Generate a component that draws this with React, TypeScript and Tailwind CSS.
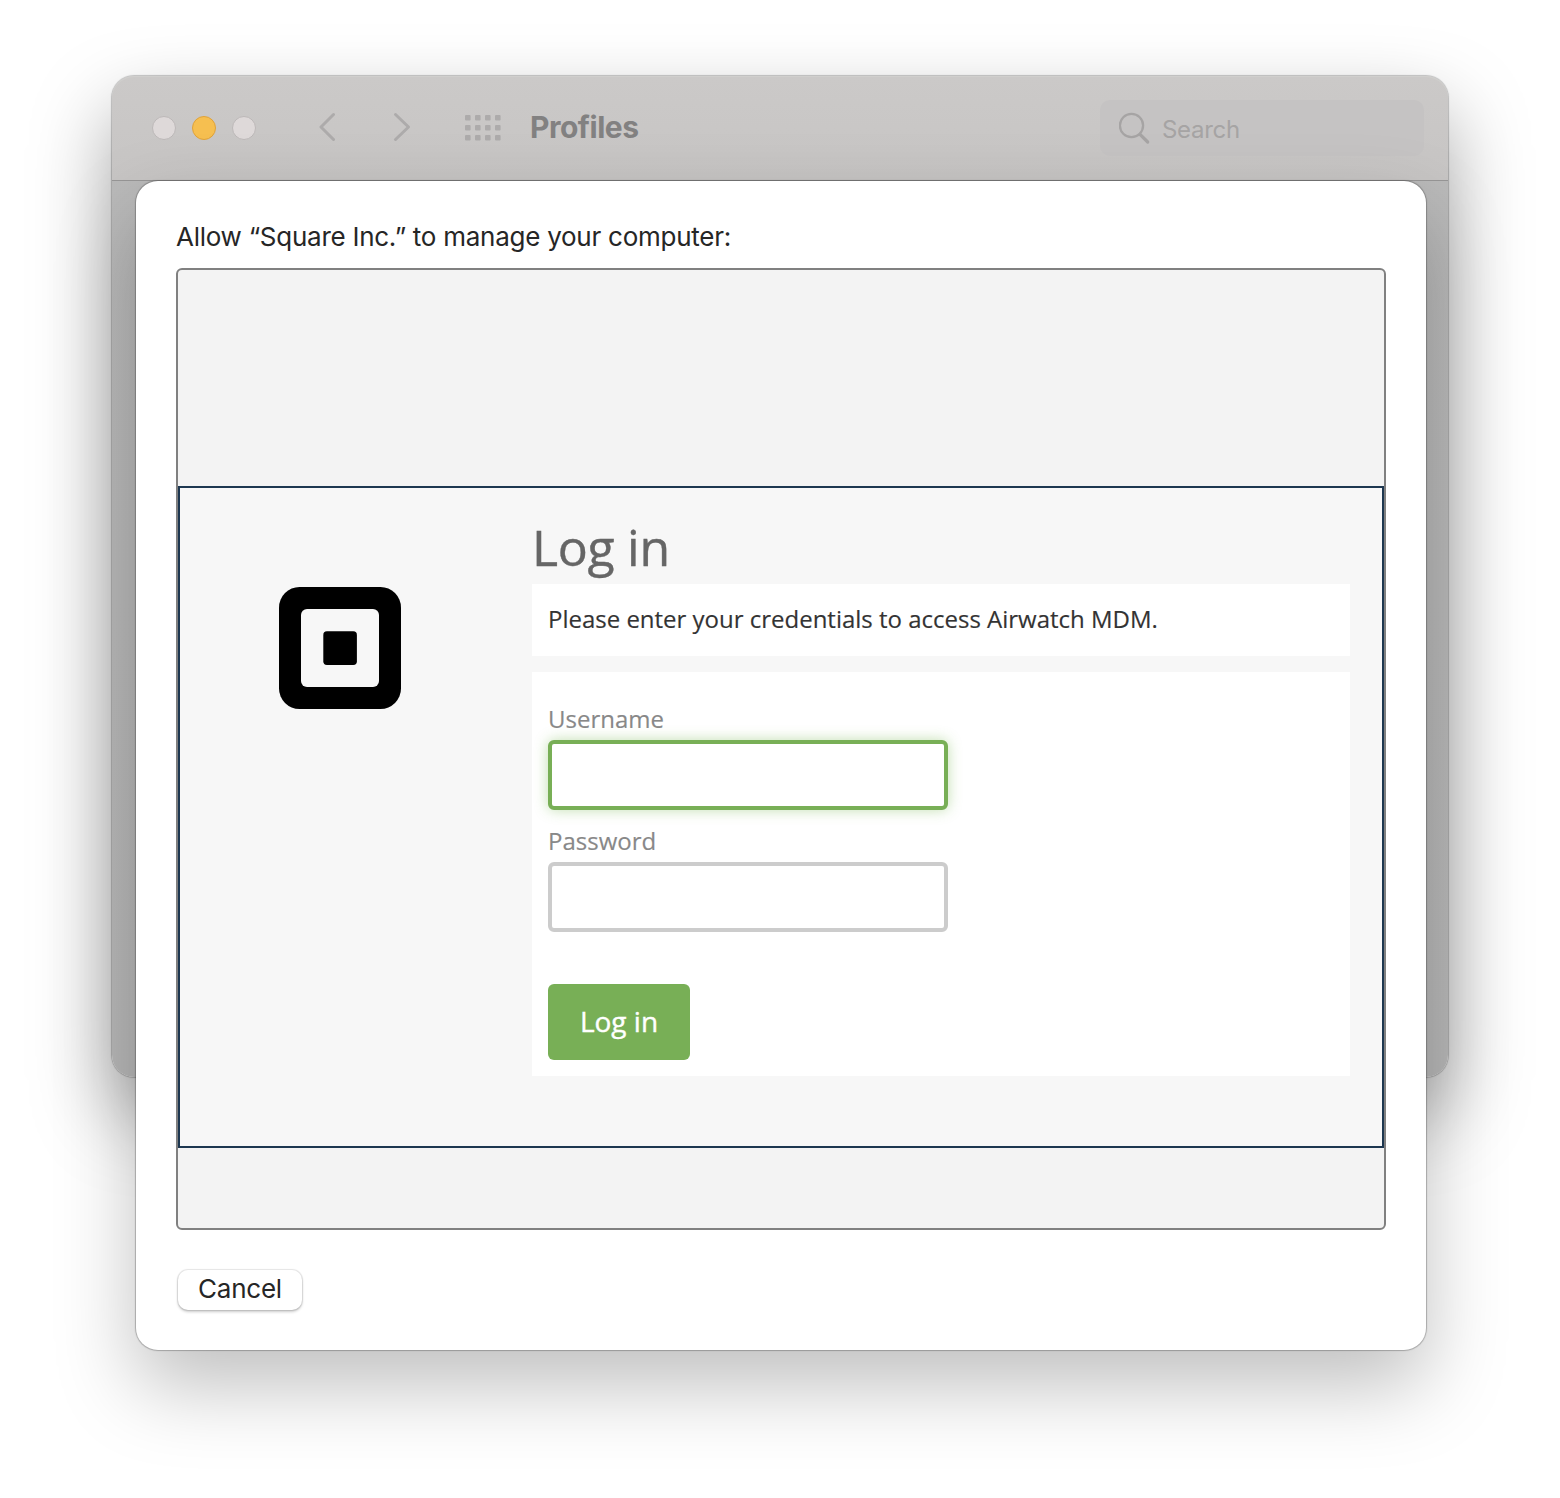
import React from "react";

function TrafficLights() {
  return (
    <div className="ml-10 flex gap-4">
      <span className="size-6 rounded-full border border-[#bcb8b8] bg-[#ded9d9]" />
      <span className="size-6 rounded-full border border-[#dfa23a] bg-[#f6bf50]" />
      <span className="size-6 rounded-full border border-[#bcb8b8] bg-[#ded9d9]" />
    </div>
  );
}

function Chevron({ d }: { d: string }) {
  return (
    <svg width="18" height="30" viewBox="0 0 18 30" fill="none" stroke="#adabab" strokeWidth="3" strokeLinecap="round" strokeLinejoin="round">
      <path d={d} />
    </svg>
  );
}

function GridIcon() {
  return (
    <svg className="ml-[54px]" width="36" height="26" viewBox="0 0 36 26" fill="#adabab">
      {[0, 10, 20, 30].map((x) =>
        [0, 10, 20].map((y) => <rect key={`${x}-${y}`} x={x} y={y} width="5.6" height="5.6" rx="1" />)
      )}
    </svg>
  );
}

function Toolbar() {
  return (
    <header className="flex h-[105px] items-center rounded-t-[22px] border-b border-[#979696] bg-linear-to-b from-[#cbc9c8] to-[#c7c5c4] shadow-[inset_0_1px_0_#d0cfcd]">
      <TrafficLights />
      <div className="mb-[2px] ml-[61px] flex w-[94px] justify-between">
        <Chevron d="M16.5 2.5 L4 15 L16.5 27.5" />
        <Chevron d="M2.5 2.5 L15.5 15 L2.5 27.5" />
      </div>
      <GridIcon />
      <h1 className="mb-[2px] ml-[29px] text-[30px] leading-9 font-bold tracking-[-0.5px] text-[#828181]">Profiles</h1>
      <div className="mr-6 ml-auto flex h-14 w-[324px] items-center rounded-[10px] bg-[#c5c3c3] pl-[18px]">
        <svg className="mt-px ml-px" width="33" height="33" viewBox="0 0 33 33" fill="none" stroke="#a6a4a4" strokeLinecap="round">
          <circle cx="12.5" cy="13.5" r="11.6" strokeWidth="2.3" />
          <path d="M21 22.3 L28.7 30" strokeWidth="3.2" />
        </svg>
        <span className="mt-1 ml-[10px] text-2xl tracking-[-0.3px] text-[#a6a4a4]">Search</span>
      </div>
    </header>
  );
}

function SquareLogo() {
  return (
    <svg className="mt-[99px] ml-[99px] shrink-0" width="122" height="122" viewBox="0 0 122 122">
      <rect width="122" height="122" rx="20.5" fill="#000" />
      <rect x="22" y="22" width="78" height="78" rx="6" fill="#f7f7f7" />
      <rect x="44.3" y="44.3" width="33.6" height="33.6" rx="3.6" fill="#000" />
    </svg>
  );
}

function LoginPage() {
  return (
    <section className="mt-[216px] flex h-[662px] border-2 border-[#1d3750] bg-[#f7f7f7] font-['Open_Sans',sans-serif]">
      <SquareLogo />
      <div className="ml-[131px] w-[818px]">
        <h2 className="flex h-24 items-end pb-px text-[50px] leading-[72px] tracking-[-0.3px] text-[#666] [-webkit-text-stroke:0.4px_#666]">
          Log in
        </h2>
        <p className="h-[72px] bg-white px-4 text-2xl leading-[70px] tracking-[-0.01px] whitespace-nowrap text-[#333] [-webkit-text-stroke:0.15px_#333]">
          Please enter your credentials to access Airwatch MDM.
        </p>
        <form className="mt-4 h-[404px] bg-white px-4 pt-[28px]">
          <label className="block h-10 text-2xl leading-[38px] text-[#888] [-webkit-text-stroke:0.15px_#888]">Username</label>
          <input className="block h-[70px] w-[400px] rounded-md border-4 border-[#78af56] bg-white shadow-[0_0_14px_rgba(120,185,80,0.45)] outline-none" />
          <label className="mt-3 block h-10 text-2xl leading-[38px] text-[#888] [-webkit-text-stroke:0.15px_#888]">Password</label>
          <input type="password" className="block h-[70px] w-[400px] rounded-md border-4 border-[#ccc] bg-white outline-none" />
          <button type="button" className="mt-[52px] h-[76px] w-[142px] rounded-md bg-[#78af56] pb-[2px] text-[28px] text-white [-webkit-text-stroke:0.4px_#fff]">
            Log in
          </button>
        </form>
      </div>
    </section>
  );
}

function Sheet() {
  return (
    <div className="relative ml-6 h-[1169px] w-[1290px] rounded-[22px] bg-white px-10 pt-[36px] shadow-[0_0_1px_1px_rgba(0,0,0,0.25),0_36px_80px_rgba(0,0,0,0.25)]">
      <p className="h-[51px] text-[26px] leading-10 tracking-[-0.26px] whitespace-nowrap text-[#262626]">
        Allow “Square Inc.” to manage your computer:
      </p>
      <div className="h-[962px] w-[1210px] rounded-md border-2 border-[#808080] bg-[#f3f3f3]">
        <LoginPage />
      </div>
      <button className="mt-10 ml-[2px] h-10 w-[124px] rounded-[10px] bg-white pb-[2px] text-[26px] leading-[38px] tracking-[-0.25px] text-[#262626] shadow-[0_0_1px_1px_rgba(0,0,0,0.1),0_2px_3px_rgba(0,0,0,0.2)]">
        Cancel
      </button>
    </div>
  );
}

export default function App() {
  return (
    <main className="h-[1498px] w-[1560px] overflow-hidden bg-white px-28 pt-[76px] font-['Inter',sans-serif]">
      <div className="h-[1001px] w-[1336px] rounded-[22px] bg-linear-to-b from-[#bababa] to-[#b8b8b8] shadow-[0_0_1px_1px_rgba(0,0,0,0.22),0_36px_80px_rgba(0,0,0,0.36)]">
        <Toolbar />
        <Sheet />
      </div>
    </main>
  );
}
